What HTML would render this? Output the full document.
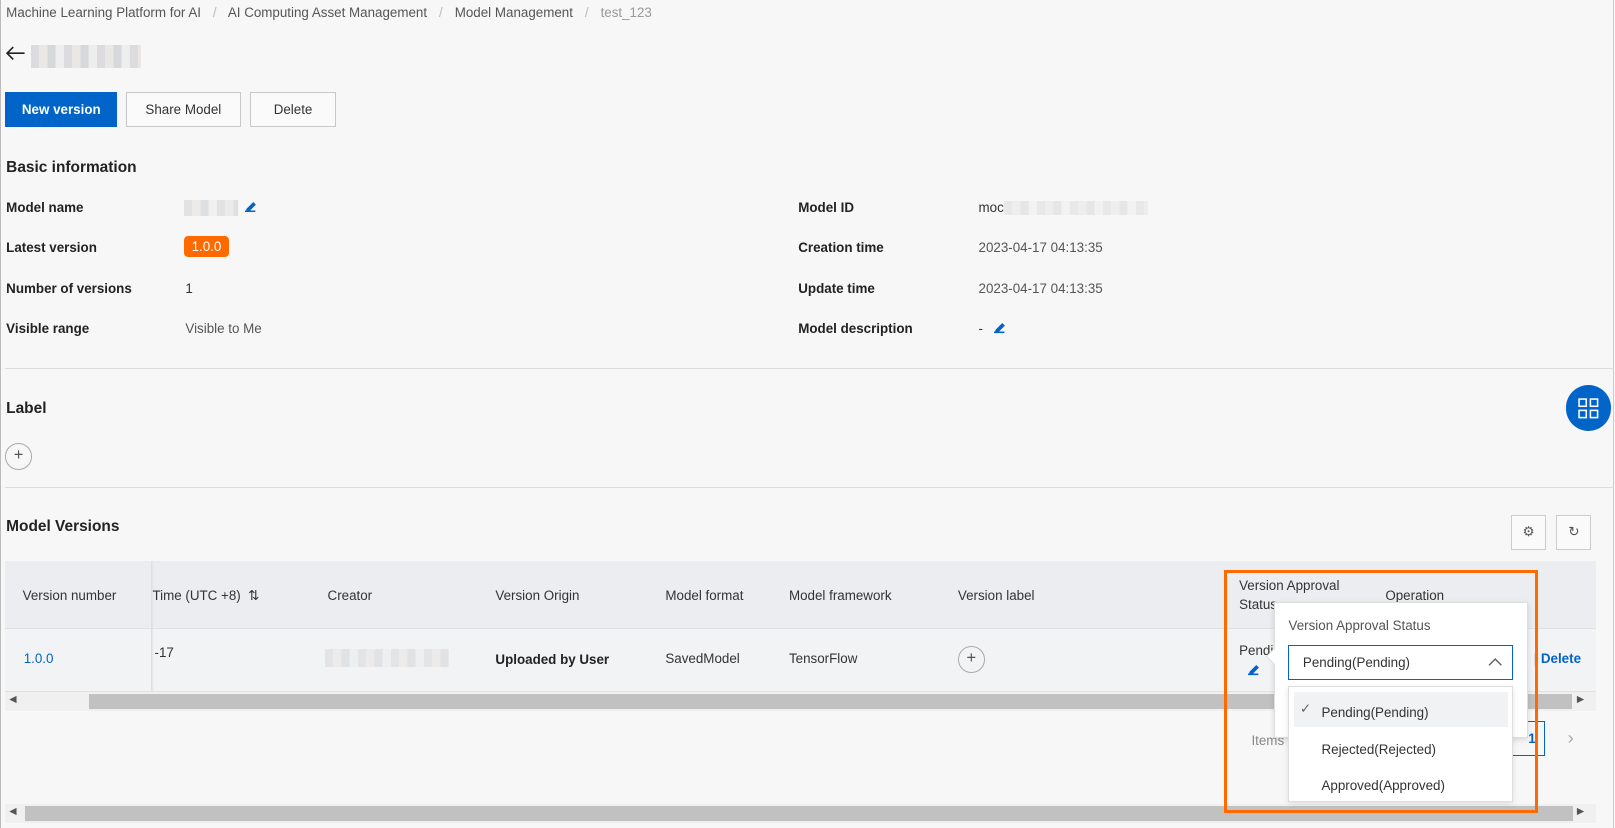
<!DOCTYPE html>
<html><head><meta charset="utf-8"><style>
html,body{margin:0;padding:0}
body{zoom:1.03;width:1568px;height:804px;background:#f7f7f7;font-family:"Liberation Sans",sans-serif;color:#333;position:relative;overflow:hidden;font-size:13px}
.a{position:absolute;white-space:nowrap}
.b{font-weight:bold;color:#222}
.btn{position:absolute;top:89px;height:34px;border:1px solid #c8c8c8;background:#fafafa;box-sizing:border-box;display:flex;align-items:center;justify-content:center;font-size:13px;color:#333}
.hr{position:absolute;left:5px;width:1562px;height:1px;background:#ddd}
.blur{position:absolute;background:repeating-linear-gradient(90deg,#d5d5d8 0 8px,#e6e3e0 8px 16px,#cfd0d4 16px 24px,#ebebeb 24px 32px)}
.pencil{position:absolute;width:12px;height:12px}
</style></head><body>
<div style="position:absolute;left:0;top:0;width:1px;height:804px;background:#bbb"></div>
<div style="position:absolute;left:1566px;top:0;width:1px;height:804px;background:#ccc"></div>
<div class="a" style="left:6px;top:5px;color:#555">Machine Learning Platform for AI <span style="color:#bbb;margin:0 8px">/</span> AI Computing Asset Management <span style="color:#bbb;margin:0 8px">/</span> Model Management <span style="color:#bbb;margin:0 8px">/</span> <span style="color:#999">test_123</span></div>
<svg class="a" style="left:5px;top:44px" width="20" height="16" viewBox="0 0 20 16"><path d="M19 8H2M8 2L2 8l6 6" stroke="#222" stroke-width="1.6" fill="none"/></svg>
<div class="blur" style="left:30px;top:44px;width:107px;height:22px;opacity:.8"></div>
<div class="btn" style="left:5px;width:109px;background:#0064c8;border-color:#0064c8;color:#fff;font-weight:bold">New version</div>
<div class="btn" style="left:122px;width:112px">Share Model</div>
<div class="btn" style="left:243px;width:83px">Delete</div>
<div class="a b" style="left:6px;top:154px;font-size:15px">Basic information</div>
<div class="a b" style="left:6px;top:194px">Model name</div>
<div class="blur" style="left:179px;top:194px;width:52px;height:16px;opacity:.6"></div>
<svg class="pencil" style="left:237px;top:194px"><path d="M1 11h10M3 9l6-6 1.5 1.5-6 6H3z" stroke="#0064c8" stroke-width="1.5" fill="#0064c8"/></svg>
<div class="a b" style="left:6px;top:233px">Latest version</div>
<div class="a" style="left:179px;top:229px;background:#ff6a00;color:#fff;border-radius:4px;padding:3px 7px;font-size:13px">1.0.0</div>
<div class="a b" style="left:6px;top:273px">Number of versions</div>
<div class="a" style="left:180px;top:273px">1</div>
<div class="a b" style="left:6px;top:312px">Visible range</div>
<div class="a" style="left:180px;top:312px;color:#555">Visible to Me</div>
<div class="a b" style="left:775px;top:194px">Model ID</div>
<div class="a" style="left:950px;top:194px">moc</div>
<div class="blur" style="left:975px;top:195px;width:140px;height:14px;opacity:.45"></div>
<div class="a b" style="left:775px;top:233px">Creation time</div>
<div class="a" style="left:950px;top:233px;color:#555">2023-04-17 04:13:35</div>
<div class="a b" style="left:775px;top:273px">Update time</div>
<div class="a" style="left:950px;top:273px;color:#555">2023-04-17 04:13:35</div>
<div class="a b" style="left:775px;top:312px">Model description</div>
<div class="a" style="left:950px;top:312px">-</div>
<svg class="pencil" style="left:964px;top:312px"><path d="M1 11h10M3 9l6-6 1.5 1.5-6 6H3z" stroke="#0064c8" stroke-width="1.5" fill="#0064c8"/></svg>
<div class="hr" style="top:357px"></div>
<div class="a b" style="left:6px;top:388px;font-size:15px">Label</div>
<div class="a" style="left:5px;top:430px;width:24px;height:24px;border:1px solid #aaa;border-radius:50%;text-align:center;line-height:23px;font-size:16px;color:#555">+</div>
<div class="hr" style="top:473px"></div>
<div class="a" style="left:1520px;top:374px;width:44px;height:44px;border-radius:50%;background:#0064c8"></div>
<svg class="a" style="left:1531px;top:385px" width="22" height="22"><g fill="none" stroke="#fff" stroke-width="1.5"><rect x="2" y="2" width="7" height="7"/><rect x="13" y="2" width="7" height="7"/><rect x="2" y="13" width="7" height="7"/><rect x="13" y="13" width="7" height="7"/></g></svg>
<div class="a b" style="left:6px;top:503px;font-size:15px">Model Versions</div>
<div class="a" style="left:1467px;top:500px;width:34px;height:34px;border:1px solid #ccc;box-sizing:border-box;background:#fafafa;text-align:center;line-height:32px;color:#555">⚙</div>
<div class="a" style="left:1511px;top:500px;width:34px;height:34px;border:1px solid #ccc;box-sizing:border-box;background:#fafafa;text-align:center;line-height:32px;color:#555">↻</div>
<div class="a" style="left:5px;top:545px;width:1545px;height:65px;background:#ebedf1"></div>
<div class="a" style="left:5px;top:610px;width:1545px;height:60px;background:#f2f3f5;border-top:1px solid #dfe1e5;border-bottom:1px solid #dfe1e5"></div>
<div class="a" style="left:147px;top:545px;width:3px;height:126px;background:linear-gradient(90deg,#ddd,transparent)"></div>
<div class="a" style="left:22px;top:571px">Version number</div>
<div class="a" style="left:148px;top:571px">Time (UTC +8) &nbsp;⇅</div>
<div class="a" style="left:318px;top:571px">Creator</div>
<div class="a" style="left:481px;top:571px">Version Origin</div>
<div class="a" style="left:646px;top:571px">Model format</div>
<div class="a" style="left:766px;top:571px">Model framework</div>
<div class="a" style="left:930px;top:571px">Version label</div>
<div class="a" style="left:1203px;top:559px;line-height:19px">Version Approval<br>Status</div>
<div class="a" style="left:1345px;top:571px">Operation</div>
<div class="a" style="left:23px;top:632px;color:#0064c8">1.0.0</div>
<div class="a" style="left:150px;top:626px">-17</div>
<div class="blur" style="left:316px;top:630px;width:120px;height:18px;opacity:.5"></div>
<div class="a b" style="left:481px;top:633px">Uploaded by User</div>
<div class="a" style="left:646px;top:632px">SavedModel</div>
<div class="a" style="left:766px;top:632px">TensorFlow</div>
<div class="a" style="left:930px;top:627px;width:24px;height:24px;border:1px solid #aaa;border-radius:50%;text-align:center;line-height:23px;font-size:16px;color:#555">+</div>
<div class="a" style="left:1203px;top:624px">Pendi</div>
<svg class="pencil" style="left:1211px;top:644px"><path d="M1 11h10M3 9l6-6 1.5 1.5-6 6H3z" stroke="#0064c8" stroke-width="1.5" fill="#0064c8"/></svg>
<div class="a" style="left:1489px;top:632px;color:#0064c8;font-weight:bold"><span style="color:#888;font-weight:normal">|</span> Delete</div>
<div class="a" style="left:5px;top:672px;width:1545px;height:18px;background:#f0f0f0"></div>
<div class="a" style="left:86px;top:674px;width:1440px;height:14px;background:#c1c1c1"></div>
<div class="a" style="left:9px;top:674px;font-size:9px;color:#555">◀</div>
<div class="a" style="left:1531px;top:674px;font-size:9px;color:#555">▶</div>
<div class="a" style="left:1215px;top:712px;color:#888">Items</div>
<div class="a" style="left:1465px;top:700px;width:35px;height:34px;border:1px solid #0064c8;box-sizing:border-box;color:#0064c8;text-align:right;padding:9px 8px 0 0;font-weight:bold">1</div>
<div class="a" style="left:1522px;top:706px;color:#aaa;font-size:18px">›</div>
<div class="a" style="left:5px;top:781px;width:1545px;height:18px;background:#f0f0f0"></div>
<div class="a" style="left:24px;top:783px;width:1503px;height:14px;background:#c1c1c1"></div>
<div class="a" style="left:9px;top:783px;font-size:9px;color:#555">◀</div>
<div class="a" style="left:1531px;top:783px;font-size:9px;color:#555">▶</div>
<div class="a" style="left:1237px;top:584px;width:245px;height:131px;background:#fff;border:1px solid #ddd;box-shadow:0 2px 6px rgba(0,0,0,.12)"></div>
<div class="a" style="left:1231px;top:632px;width:10px;height:10px;background:#fff;transform:rotate(45deg);border-left:1px solid #ddd;border-bottom:1px solid #ddd"></div>
<div class="a" style="left:1251px;top:600px;color:#555">Version Approval Status</div>
<div class="a" style="left:1250px;top:626px;width:219px;height:34px;border:1px solid #0064c8;box-sizing:border-box;background:#fff;padding:9px 0 0 14px">Pending(Pending)</div>
<svg class="a" style="left:1445px;top:638px" width="14" height="10"><path d="M1 8l6-6 6 6" stroke="#666" stroke-width="1.4" fill="none"/></svg>
<div class="a" style="left:1250px;top:666px;width:219px;height:113px;border:1px solid #ddd;box-sizing:border-box;background:#fff;box-shadow:0 2px 6px rgba(0,0,0,.1)"></div>
<div class="a" style="left:1256px;top:672px;width:208px;height:34px;background:#f1f2f4"></div>
<div class="a" style="left:1262px;top:681px;color:#666">✓</div>
<div class="a" style="left:1283px;top:684px">Pending(Pending)</div>
<div class="a" style="left:1283px;top:720px">Rejected(Rejected)</div>
<div class="a" style="left:1283px;top:755px">Approved(Approved)</div>
<div class="a" style="left:1188px;top:553px;width:305px;height:236px;border:3px solid #ff6a00;box-sizing:border-box"></div>
</body></html>
